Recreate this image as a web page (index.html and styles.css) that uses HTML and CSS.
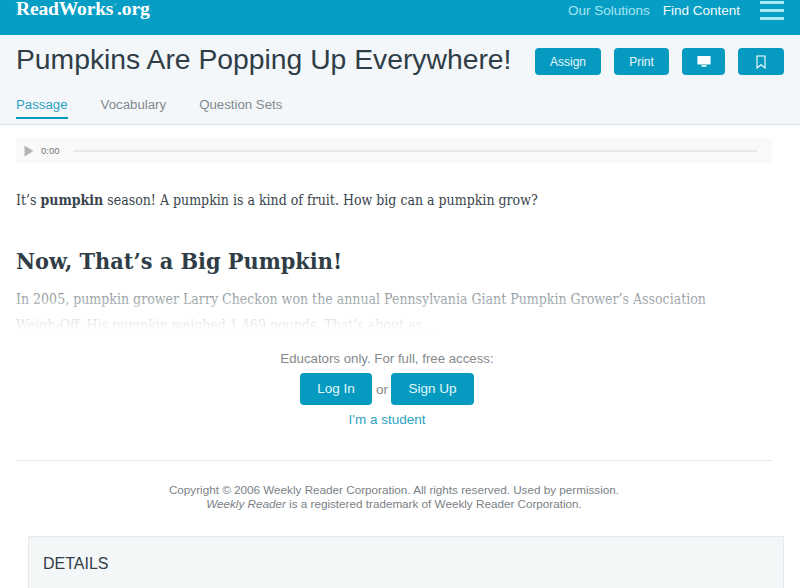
FILE: index.html
```html
<!DOCTYPE html>
<html lang="en">
<head>
<meta charset="utf-8">
<title>Pumpkins Are Popping Up Everywhere!</title>
<link rel="stylesheet" href="styles.css">
</head>
<body>
<header class="topbar">
  <a class="logo">ReadWorks<span class="reg">®</span>.org</a>
  <nav class="topnav">
    <a class="topnav-dim">Our Solutions</a>
    <a class="topnav-bright">Find Content</a>
    <span class="burger"><i></i><i></i><i></i></span>
  </nav>
</header>
<section class="titlebar">
  <div class="titlerow">
    <h1>Pumpkins Are Popping Up Everywhere!</h1>
    <div class="actions">
      <a class="btn btn-assign">Assign</a>
      <a class="btn btn-print">Print</a>
      <a class="btn btn-screen">
        <svg width="14" height="13" viewBox="0 0 14 13"><path d="M1 1h12a.6.6 0 0 1 .6.6v7.200a.6.6 0 0 1-.6.6H1a.6.6 0 0 1-.6-.6V1.600A.6.6 0 0 1 1 1z" fill="#fff"/><path d="M4.500 10.200h5v1.600h-5z" fill="#fff"/></svg>
      </a>
      <a class="btn btn-mark">
        <svg width="10" height="14" viewBox="0 0 10 14"><path d="M1 1h8v12L5 9.800 1 13z" fill="none" stroke="#fff" stroke-width="1.100"/></svg>
      </a>
    </div>
  </div>
  <nav class="tabs">
    <a class="tab tab-active">Passage</a>
    <a class="tab">Vocabulary</a>
    <a class="tab">Question Sets</a>
  </nav>
</section>
<main class="content">
  <div class="audio">
    <svg class="play" width="10" height="12" viewBox="0 0 10 12"><path d="M0.500 0.500L9.500 6L0.500 11.500z" fill="#b5b5b5"/></svg>
    <span class="time">0:00</span>
    <span class="track"></span>
  </div>
  <p class="lead">It’s <b>pumpkin</b> season! A pumpkin is a kind of fruit. How big can a pumpkin grow?</p>
  <h2>Now, That’s a Big Pumpkin!</h2>
  <div class="fade">
    <p>In 2005, pumpkin grower Larry Checkon won the annual Pennsylvania Giant Pumpkin Grower’s Association Weigh-Off. His pumpkin weighed 1,469 pounds. That’s about as...</p>
  </div>
  <div class="gate">
    <p class="gate-note">Educators only. For full, free access:</p>
    <div class="gate-actions">
      <a class="cta cta-login">Log In</a>
      <span class="or">or</span>
      <a class="cta cta-signup">Sign Up</a>
    </div>
    <a class="student">I'm a student</a>
  </div>
  <hr class="rule">
  <p class="copyright">Copyright © 2006 Weekly Reader Corporation. All rights reserved. Used by permission.<br><em>Weekly Reader</em> is a registered trademark of Weekly Reader Corporation.</p>
</main>
<section class="details">
  <h3>DETAILS</h3>
</section>
</body>
</html>
```

FILE: styles.css
```css
* { box-sizing: border-box; }
html, body { height: 588px; overflow: hidden; }
body { margin: 0; background: #fff; font-family: "Liberation Sans", Arial, sans-serif; color: #2f3d47; }
a { text-decoration: none; }

.topbar { height: 35px; background: #069ec4; display: flex; justify-content: space-between; align-items: flex-start; padding: 0 16px; }
.logo { font-family: "Liberation Serif", serif; font-weight: 700; font-size: 19.600px; line-height: 18px; letter-spacing: -0.2px; color: #fff; display: block; white-space: nowrap; }
.reg { font-size: 5px; font-weight: 400; line-height: 0; vertical-align: 9px; letter-spacing: 0; color: #bfeaf4; }
.topnav { display: flex; align-items: flex-start; font-size: 13.500px; line-height: 22px; }
.topnav-dim { color: #a6e6f2; margin-right: 13px; }
.topnav-bright { color: #f0fbfd; margin-right: 20px; }
.burger { display: flex; flex-direction: column; gap: 5px; width: 24px; margin-top: 1px; }
.burger i { display: block; height: 3px; background: #a9eaf4; }

.titlebar { height: 90px; background: #f4f7f9; border-bottom: 1px solid #dfe3e6; padding: 0 16px; }
.titlerow { display: flex; justify-content: space-between; align-items: flex-start; }
h1 { margin: 4px 0 0; font-size: 28.300px; line-height: 40px; font-weight: 400; color: #2f3d47; white-space: nowrap; }
.actions { display: flex; gap: 13px; margin-top: 13px; }
.btn { height: 27px; border-radius: 4px; background: #079ac0; color: #e8f7fb; font-size: 12px; line-height: 26px; display: flex; align-items: center; justify-content: center; }
.btn-assign { width: 66px; }
.btn-print { width: 55px; }
.btn-screen { width: 43px; }
.btn-mark { width: 46px; }
.tabs { display: flex; gap: 33px; margin-top: 12px; }
.tab { color: #80898f; font-size: 13.250px; line-height: 18px; height: 29px; padding-top: 5px; }
.tab-active { color: #2ba3c4; border-bottom: 2px solid #079ac0; height: 28px; }

.content { padding: 13px 28px 0 16px; }
.audio { height: 25px; background: #f9f9f9; display: flex; align-items: center; padding: 0 15px 0 8px; border-radius: 3px; }
.time { font-size: 9.500px; color: #6f767b; margin-left: 7px; }
.track { flex: 1; height: 2px; background: #e8e8e8; margin-left: 13px; }

.lead { margin: 27px 0 0; font-family: "DejaVu Serif", serif; font-stretch: condensed; font-size: 14px; line-height: 20px; color: #3a454d; white-space: nowrap; }
h2 { margin: 34px 0 0; font-family: "DejaVu Serif", serif; font-stretch: condensed; font-size: 23.200px; line-height: 34px; font-weight: 700; color: #2f3d47; white-space: nowrap; }
.fade { position: relative; margin-top: 8px; height: 52px; overflow: hidden; padding-right: 30px; }
.fade p { margin: 0; font-family: "DejaVu Serif", serif; font-stretch: condensed; font-size: 14px; line-height: 26px; color: #8f979c; }
.fade::after { content: ""; position: absolute; inset: 0; background: linear-gradient(rgba(255,255,255,0) 15%, #fff 85%); }

.gate { text-align: center; margin-top: 12px; padding-right: 14px; }
.gate-note { margin: 0; font-size: 13.250px; line-height: 18px; color: #84898d; }
.gate-actions { display: flex; justify-content: center; align-items: center; gap: 4px; margin-top: 5px; }
.cta { height: 32px; border-radius: 4px; background: #079ac0; color: #e4f6fa; font-size: 13.500px; line-height: 32px; text-align: center; }
.cta-login { width: 72px; }
.cta-signup { width: 83px; }
.or { color: #84898d; font-size: 13.500px; width: 11px; }
.student { display: block; margin-top: 6px; font-size: 13.500px; line-height: 18px; color: #2ba3c4; }
.rule { border: 0; height: 1px; background: #e4e6e7; margin: 31px 0 0; }
.copyright { margin: 22px 0 0; text-align: center; font-size: 11.700px; line-height: 14px; color: #7b8186; }

.details { margin: 25px 16px 0 28px; height: 60px; background: #f3f7f8; border: 1px solid #e6eaec; padding: 16px 14px; }
h3 { margin: 0; font-size: 16px; line-height: 22px; font-weight: 400; color: #2f3d47; }
```
